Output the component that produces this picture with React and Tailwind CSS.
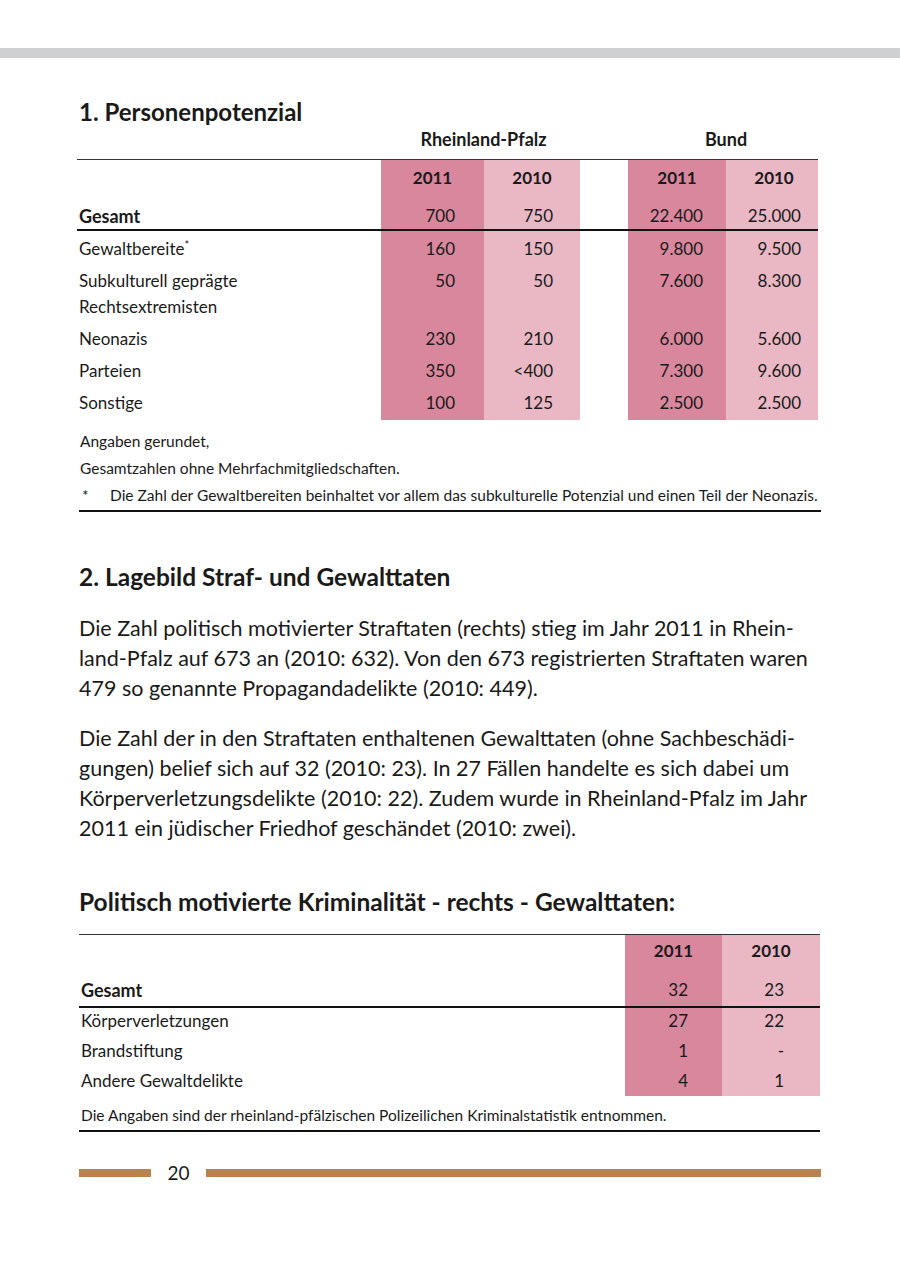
import React from "react";

const DARK = "bg-[#d9879d]";
const LIGHT = "bg-[#eab7c4]";

const rows1 = [
  { label: "Gewaltbereite", sup: true, v: ["160", "150", "9.800", "9.500"] },
  { label: ["Subkulturell geprägte", "Rechtsextremisten"], v: ["50", "50", "7.600", "8.300"] },
  { label: "Neonazis", v: ["230", "210", "6.000", "5.600"] },
  { label: "Parteien", v: ["350", "<400", "7.300", "9.600"] },
  { label: "Sonstige", v: ["100", "125", "2.500", "2.500"], last: true },
];

const rows2 = [
  { label: "Körperverletzungen", v: ["27", "22"] },
  { label: "Brandstiftung", v: ["1", "-"] },
  { label: "Andere Gewaltdelikte", v: ["4", "1"], last: true },
];

function Cells({ v, h, bold }) {
  const w = bold ? "font-bold text-center" : "text-right";
  return (
    <>
      <div className={`${DARK} ${h} ${w} ${bold ? "" : "pr-[29px]"} pt-[5px]`}>{v[0]}</div>
      <div className={`${LIGHT} ${h} ${w} ${bold ? "" : "pr-[27px]"} pt-[5px]`}>{v[1]}</div>
      <div className={h}></div>
      <div className={`${DARK} ${h} ${w} ${bold ? "" : "pr-[23px]"} pt-[5px]`}>{v[2]}</div>
      <div className={`${LIGHT} ${h} ${w} ${bold ? "pl-[4px]" : "pr-[17px]"} pt-[5px]`}>{v[3]}</div>
    </>
  );
}

function PersonTable() {
  const grid = "grid grid-cols-[304px_103px_96px_48px_98px_92px]";
  return (
    <div className="ml-[-2px] w-[741px] text-[17px] leading-[26px] text-[#1a1a1a]">
      <div className={`${grid} h-[33px] font-bold text-[18px] text-[#1a1a1a]`}>
        <div></div>
        <div className="col-span-2 text-center pl-[6px]">Rheinland-Pfalz</div>
        <div></div>
        <div className="col-span-2 text-center pl-[6px]">Bund</div>
      </div>
      <div className="h-px bg-[#333]"></div>
      <div className={grid}>
        <div className="h-[38px]"></div>
        <Cells v={["2011", "2010", "2011", "2010"]} h="h-[38px]" bold />
        <div className="h-[31px] pt-[5px] pl-[2px] font-bold text-[18px]">Gesamt</div>
        <Cells v={["700", "750", "22.400", "25.000"]} h="h-[31px]" />
      </div>
      <div className="h-[2px] bg-[#111]"></div>
      <div className={grid}>
        {rows1.map((r, i) => {
          const lines = Array.isArray(r.label) ? r.label : [r.label];
          const h = lines.length > 1 ? "h-[58px]" : r.last ? "h-[35px]" : "h-[32px]";
          return (
            <React.Fragment key={i}>
              <div className={`${h} pt-[5px] pl-[2px]`}>
                {lines.map((l, j) => (
                  <div key={j}>
                    {l}
                    {r.sup && <span className="text-[11px] align-top leading-[18px]">*</span>}
                  </div>
                ))}
              </div>
              <Cells v={r.v} h={h} />
            </React.Fragment>
          );
        })}
      </div>
    </div>
  );
}

function CrimeTable() {
  const grid = "grid grid-cols-[546px_97px_98px]";
  return (
    <div className="w-[741px] text-[17px] leading-[26px] text-[#1a1a1a]">
      <div className="h-px bg-[#333]"></div>
      <div className={grid}>
        <div className="h-[39px]"></div>
        <div className={`${DARK} h-[39px] pt-[3px] text-center font-bold`}>2011</div>
        <div className={`${LIGHT} h-[39px] pt-[3px] text-center font-bold`}>2010</div>
        <div className="h-[32px] pt-[3px] pl-[2px] font-bold text-[18px]">Gesamt</div>
        <div className={`${DARK} h-[32px] pt-[3px] text-right pr-[34px]`}>32</div>
        <div className={`${LIGHT} h-[32px] pt-[3px] text-right pr-[36px]`}>23</div>
      </div>
      <div className="h-[2px] bg-[#111]"></div>
      <div className={grid}>
        {rows2.map((r, i) => {
          const h = r.last ? "h-[28px]" : "h-[30px]";
          return (
            <React.Fragment key={i}>
              <div className={`${h} pl-[2px]`}>{r.label}</div>
              <div className={`${DARK} ${h} text-right pr-[34px]`}>{r.v[0]}</div>
              <div className={`${LIGHT} ${h} text-right pr-[36px]`}>{r.v[1]}</div>
            </React.Fragment>
          );
        })}
      </div>
      <div className="text-[15.5px] leading-[20px] pt-[9px] pb-[5px] pl-[2px]">
        Die Angaben sind der rheinland-pfälzischen Polizeilichen Kriminalstatistik entnommen.
      </div>
      <div className="h-[2px] bg-[#111]"></div>
    </div>
  );
}

export default function App() {
  return (
    <div className="w-[900px] h-[1276px] bg-white font-['Lato',sans-serif] text-[#1a1a1a]">
      <div className="pt-[48px]">
        <div className="h-[10px] bg-[#cfd0d2]"></div>
      </div>
      <div className="px-[79px]">
        <h1 className="mt-[40px] text-[24px] leading-[28px] font-bold">1. Personenpotenzial</h1>
        <PersonTable />
        <div className="mt-[8px] text-[15.5px] leading-[27px] pl-[1px]">
          <div>Angaben gerundet,</div>
          <div>Gesamtzahlen ohne Mehrfachmitgliedschaften.</div>
          <div className="flex">
            <span className="w-[30px] pl-[2px]">*</span>
            <span className="whitespace-nowrap">Die Zahl der Gewaltbereiten beinhaltet vor allem das subkulturelle Potenzial und einen Teil der Neonazis.</span>
          </div>
        </div>
        <div className="h-[2px] bg-[#111] mt-[1px]"></div>

        <h2 className="mt-[50px] text-[24.5px] leading-[30px] font-bold">2. Lagebild Straf- und Gewalttaten</h2>
        <p className="mt-[21px] text-[21.5px] leading-[30px] whitespace-nowrap">
          Die Zahl politisch motivierter Straftaten (rechts) stieg im Jahr 2011 in Rhein-
          <br />
          land-Pfalz auf 673 an (2010: 632). Von den 673 registrierten Straftaten waren
          <br />
          479 so genannte Propagandadelikte (2010: 449).
        </p>
        <p className="mt-[20px] text-[21.5px] leading-[30px] whitespace-nowrap">
          Die Zahl der in den Straftaten enthaltenen Gewalttaten (ohne Sachbeschädi-
          <br />
          gungen) belief sich auf 32 (2010: 23). In 27 Fällen handelte es sich dabei um
          <br />
          Körperverletzungsdelikte (2010: 22). Zudem wurde in Rheinland-Pfalz im Jahr
          <br />
          2011 ein jüdischer Friedhof geschändet (2010: zwei).
        </p>

        <h3 className="mt-[45px] text-[24.5px] leading-[28px] font-bold">
          Politisch motivierte Kriminalität - rechts - Gewalttaten:
        </h3>
        <div className="mt-[18px]">
          <CrimeTable />
        </div>

        <div className="mt-[29px] flex items-center h-[24px]">
          <div className="w-[72px] h-[8px] bg-[#b8834f]"></div>
          <div className="w-[55px] text-center text-[19px]">20</div>
          <div className="flex-1 h-[8px] bg-[#b8834f]"></div>
        </div>
      </div>
    </div>
  );
}
